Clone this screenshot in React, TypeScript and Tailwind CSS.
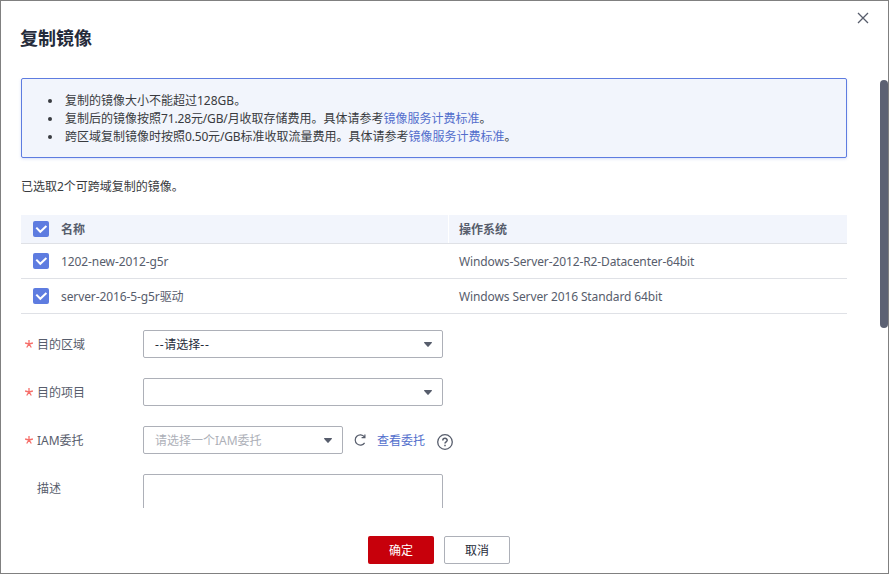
import type { ReactNode } from "react";

function CheckedBox() {
  return (
    <span className="flex h-4 w-4 shrink-0 items-center justify-center rounded-[2px] bg-[#5e7ce0]">
      <svg width="16" height="16" viewBox="0 0 16 16" fill="none">
        <path d="M3.3 6.6 L7.3 10.8 L13.4 5" stroke="#fff" strokeWidth="2" />
      </svg>
    </span>
  );
}

function Caret() {
  return (
    <svg width="8" height="5" viewBox="0 0 8 5" className="shrink-0">
      <path d="M0.3 0 H7.7 L8 0.7 L4.6 4.6 Q4 5.2 3.4 4.6 L0 0.7 Z" fill="#575d6c" />
    </svg>
  );
}

function Select({ className, children }: { className: string; children?: ReactNode }) {
  return (
    <div
      className={`flex h-7 items-center justify-between rounded-[2px] border border-[#adb0b8] bg-white pr-[10px] pl-[11px] ${className}`}
    >
      <span className="pt-[2px]">{children}</span>
      <Caret />
    </div>
  );
}

function Field({ label, required, children }: { label: string; required?: boolean; children: ReactNode }) {
  return (
    <div className="flex items-start">
      <div className="flex h-7 w-[122px] shrink-0 items-center text-[#575d6c]">
        <span className="flex w-4 pl-1">
          {required && (
            <svg width="8" height="8" viewBox="0 0 8 8" fill="none" stroke="#f66f6a" strokeWidth="1.3">
              <path d="M4 0 V4 M0.1 3 L4 4 L7.9 3 M1.7 7.5 L4 4 L6.3 7.5" />
            </svg>
          )}
        </span>
        <span className="pt-[2px]">{label}</span>
      </div>
      {children}
    </div>
  );
}

const rows = [
  { name: "1202-new-2012-g5r", os: "Windows-Server-2012-R2-Datacenter-64bit" },
  { name: "server-2016-5-g5r驱动", os: "Windows Server 2016 Standard 64bit" },
];

export default function App() {
  return (
    <div className="flex h-[574px] w-[889px] flex-col overflow-hidden border border-[#808080] bg-white font-['Noto_Sans','Noto_Sans_CJK_SC',sans-serif] text-[12px] leading-[18px] text-[#393b40]">
      <header className="flex h-[77px] shrink-0 items-start justify-between pr-[19px] pl-5">
        <h1 className="-ml-px pt-6 text-[18px] leading-[27px] font-bold text-[#252b3a]">复制镜像</h1>
        <button className="mt-[11px]" aria-label="关闭">
          <svg width="12" height="12" viewBox="0 0 12 12" fill="none" stroke="#575d6c" strokeWidth="1.3">
            <path d="M1 1 L11 11 M11 1 L1 11" />
          </svg>
        </button>
      </header>

      <main className="flex h-[430px] shrink-0 justify-between overflow-hidden pl-5">
        <div className="w-[826px]">
          <section className="h-20 rounded-[2px] border border-[#5e7ce0] bg-[#f2f5fc] pt-[13px] pl-[43px] shadow-[0_1px_3px_rgba(94,124,224,0.25)]">
            <ul className="list-none">
              {[
                <>复制的镜像大小不能超过128GB。</>,
                <>
                  复制后的镜像按照<span className="tracking-[-0.15px]">71.28元/GB/月</span>收取存储费用。具体请参考<a className="text-[#526ecc]">镜像服务计费标准</a>。
                </>,
                <>
                  跨区域复制镜像时按照<span className="tracking-[-0.18px]">0.50元/GB</span>标准收取流量费用。具体请参考<a className="text-[#526ecc]">镜像服务计费标准</a>。
                </>,
              ].map((item, i) => (
                <li key={i} className="-ml-[17px] flex items-center gap-[13px] whitespace-nowrap">
                  <span className="h-1 w-1 rounded-full bg-[#393b40]" />
                  <span>{item}</span>
                </li>
              ))}
            </ul>
          </section>

          <p className="mt-5 leading-[18px]">已选取2个可跨域复制的镜像。</p>

          <section className="mt-[19px] text-[#575d6c]">
            <div className="flex h-[29px] items-center border-b border-[#dfe1e6] bg-[#f2f5fc] font-bold">
              <div className="flex w-[427px] items-center gap-3 pl-3">
                <CheckedBox />
                <span className="pt-[2px]">名称</span>
              </div>
              <div className="flex h-7 flex-1 items-center border-l border-white pt-[2px] pl-[10px]">操作系统</div>
            </div>
            {rows.map((row) => (
              <div key={row.name} className="flex h-[35px] items-center border-b border-[#dfe1e6]">
                <div className="flex w-[427px] items-center gap-3 pl-3">
                  <CheckedBox />
                  <span className="pt-[2px] tracking-[-0.1px]">{row.name}</span>
                </div>
                <span className="pt-[2px] pl-[11px] tracking-[-0.115px]">{row.os}</span>
              </div>
            ))}
          </section>

          <form className="mt-4 flex flex-col gap-5">
            <Field label="目的区域" required>
              <Select className="w-[300px] text-[#252b3a]">
                <span className="tracking-[0.8px]">--</span>请选择<span className="tracking-[0.8px]">--</span>
              </Select>
            </Field>
            <Field label="目的项目" required>
              <Select className="w-[300px]" />
            </Field>
            <Field label="IAM委托" required>
              <Select className="w-[200px] text-[#adb0b8]">请选择一个IAM委托</Select>
              <div className="flex h-7 items-center">
                <svg className="ml-[11px] shrink-0" width="12" height="12" viewBox="0 0 12 12" fill="none" stroke="#575d6c" strokeWidth="1.2">
                  <path d="M10.6 8.8 A5.1 5.1 0 1 1 10.4 2.9 M10.9 0.5 V3.6 H7.6" />
                </svg>
                <a className="ml-[11px] pt-[2px] text-[#526ecc]">查看委托</a>
                <svg className="mt-[3px] ml-3 shrink-0" width="16" height="16" viewBox="0 0 16 16" fill="none" stroke="#575d6c">
                  <circle cx="8" cy="8" r="7.3" strokeWidth="1.3" />
                  <path d="M5.8 6.5 C5.8 3.6 10.2 3.7 10.2 6.3 C10.2 7.8 8 7.8 8 9.5" strokeWidth="1.5" />
                  <path d="M8 10.7 V12.2" strokeWidth="1.5" />
                </svg>
              </div>
            </Field>
            <Field label="描述">
              <div className="h-16 w-[300px] rounded-[2px] border border-[#adb0b8] bg-white" />
            </Field>
          </form>
        </div>
        <div className="mt-[2px] h-[248px] w-2 rounded-full bg-[#5c6173]" />
      </main>

      <footer className="flex justify-center gap-[10px] pt-7 pr-[11px]">
        <button className="h-7 w-[66px] rounded-[2px] bg-[#c7000b] pt-[2px] text-white">确定</button>
        <button className="h-7 w-[66px] rounded-[2px] border border-[#adb0b8] bg-white pt-[2px] text-[#252b3a]">取消</button>
      </footer>
    </div>
  );
}
